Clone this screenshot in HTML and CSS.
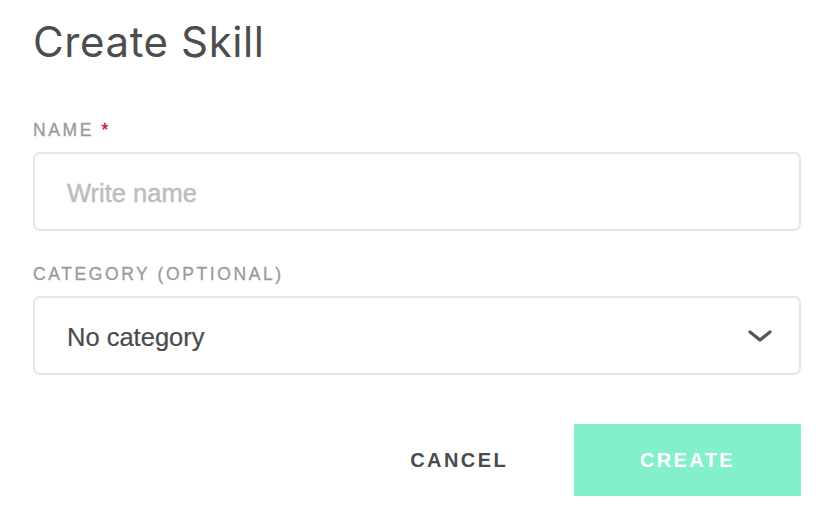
FILE: index.html
```html
<!DOCTYPE html>
<html lang="en">
<head>
<meta charset="utf-8">
<title>Create Skill</title>
<link rel="stylesheet" href="styles.css">
</head>
<body>
<div class="dialog">
  <h1 class="title">Create Skill</h1>
  <div class="field field-name">
    <label class="label">NAME <span class="req">*</span></label>
    <div class="box"><span class="placeholder">Write name</span></div>
  </div>
  <div class="field field-cat">
    <label class="label">CATEGORY (OPTIONAL)</label>
    <div class="box select">
      <span class="value">No category</span>
      <svg class="chev" width="26" height="14" viewBox="0 0 26 14"><path d="M3 3 L13 11 L23 3" fill="none" stroke="#555" stroke-width="3.2" stroke-linecap="round" stroke-linejoin="round"/></svg>
    </div>
  </div>
  <div class="actions">
    <button class="btn cancel">CANCEL</button>
    <button class="btn create">CREATE</button>
  </div>
</div>
</body>
</html>
```
FILE: styles.css
```css
* { box-sizing: border-box; }
html, body { margin: 0; padding: 0; background: #fff; }
body { font-family: "Liberation Sans", Arial, sans-serif; }
.dialog { width: 768px; margin-left: 33px; padding-top: 18px; }
.title {
  margin: 0;
  font-family: "Inter", "Liberation Sans", sans-serif;
  font-weight: 400;
  font-size: 42px;
  line-height: 48px;
  color: #4d4d4d;
  letter-spacing: 0.6px;
}
.field-name { margin-top: 54px; }
.field-cat { margin-top: 33px; }
.label {
  display: block;
  font-size: 17.5px;
  line-height: 20px;
  letter-spacing: 2.6px;
  color: #9b9b9b;
  -webkit-text-stroke: 0.35px #9b9b9b;
  margin-bottom: 12px;
}
.req { color: #c8102e; -webkit-text-stroke: 0.35px #c8102e; }
.box {
  height: 79px;
  border: 2px solid #e6e6e6;
  border-radius: 7px;
  display: flex;
  align-items: center;
  padding: 3px 26px 0 32px;
  font-size: 25.5px;
}
.placeholder { color: #bdbdbd; -webkit-text-stroke: 0.5px #bdbdbd; }
.value { color: #4b4b4b; flex: 1; -webkit-text-stroke: 0.2px #4b4b4b; }
.chev { margin-top: -3px; }
.actions {
  display: flex;
  justify-content: flex-end;
  align-items: center;
  margin-top: 49px;
}
.btn {
  border: 0;
  background: none;
  font-family: "Liberation Sans", Arial, sans-serif;
  font-weight: 700;
  font-size: 20px;
  letter-spacing: 2.4px;
  cursor: pointer;
}
.cancel { color: #4b4b4b; margin-right: 66px; padding: 0; }
.create {
  width: 227px;
  height: 72px;
  background: #84f0cb;
  color: #fff;
  padding: 0;
}
```
